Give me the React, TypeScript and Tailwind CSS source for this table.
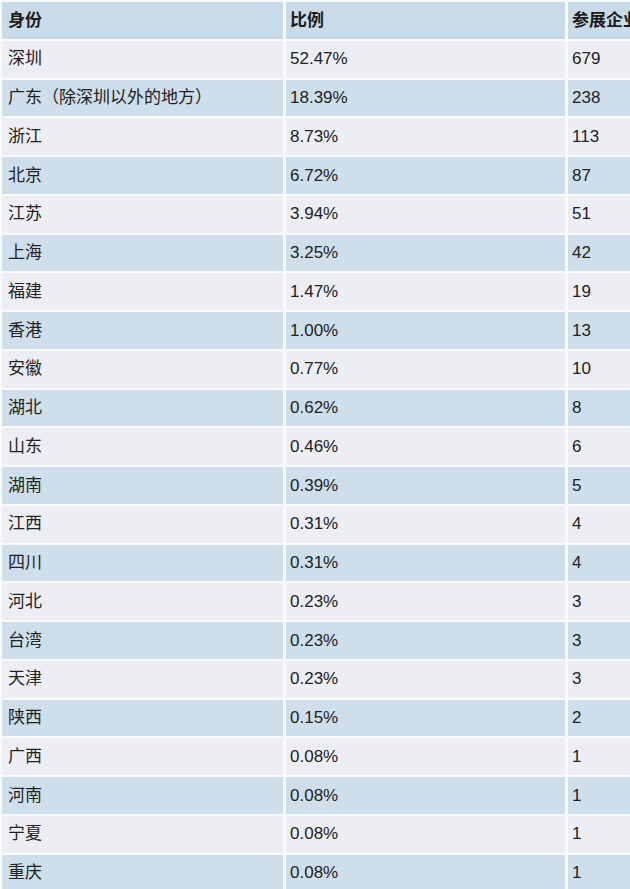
const rows: [string, string, string][] = [
  ['深圳', '52.47%', '679'],
  ['广东（除深圳以外的地方）', '18.39%', '238'],
  ['浙江', '8.73%', '113'],
  ['北京', '6.72%', '87'],
  ['江苏', '3.94%', '51'],
  ['上海', '3.25%', '42'],
  ['福建', '1.47%', '19'],
  ['香港', '1.00%', '13'],
  ['安徽', '0.77%', '10'],
  ['湖北', '0.62%', '8'],
  ['山东', '0.46%', '6'],
  ['湖南', '0.39%', '5'],
  ['江西', '0.31%', '4'],
  ['四川', '0.31%', '4'],
  ['河北', '0.23%', '3'],
  ['台湾', '0.23%', '3'],
  ['天津', '0.23%', '3'],
  ['陕西', '0.15%', '2'],
  ['广西', '0.08%', '1'],
  ['河南', '0.08%', '1'],
  ['宁夏', '0.08%', '1'],
  ['重庆', '0.08%', '1'],
]

export default function App() {
  return (
    <div
      className="w-[630px] h-[889px] overflow-hidden bg-[#f8f9fb] pt-[2px] pl-[2px]"
      style={{ fontFamily: '"Liberation Sans", "Noto Sans CJK SC", sans-serif' }}
    >
      <div className="w-[680px] flex flex-col gap-[2px]">
        {/* Header */}
        <div className="grid grid-cols-[281px_279px_1fr] gap-x-[3px] h-[36.76px] text-[17px] font-bold text-[#1c1c1c]">
          <div className="bg-[#c9dbe8] flex items-center pl-[6px]">身份</div>
          <div className="bg-[#c9dbe8] flex items-center pl-[4px]">比例</div>
          <div className="bg-[#c9dbe8] flex items-center pl-[4px] whitespace-nowrap">参展企业</div>
        </div>

        {rows.map(([name, pct, count], i) => {
          const bg = i % 2 === 0 ? 'bg-[#eceef3]' : 'bg-[#cedfeb]'
          return (
            <div
              key={name}
              className="grid grid-cols-[281px_279px_1fr] gap-x-[3px] h-[36.76px] text-[17px] text-[#222]"
            >
              <div className={`${bg} flex items-center pl-[6px] whitespace-nowrap`}>{name}</div>
              <div className={`${bg} flex items-center pl-[4px]`}>{pct}</div>
              <div className={`${bg} flex items-center pl-[4px]`}>{count}</div>
            </div>
          )
        })}
      </div>
    </div>
  )
}
